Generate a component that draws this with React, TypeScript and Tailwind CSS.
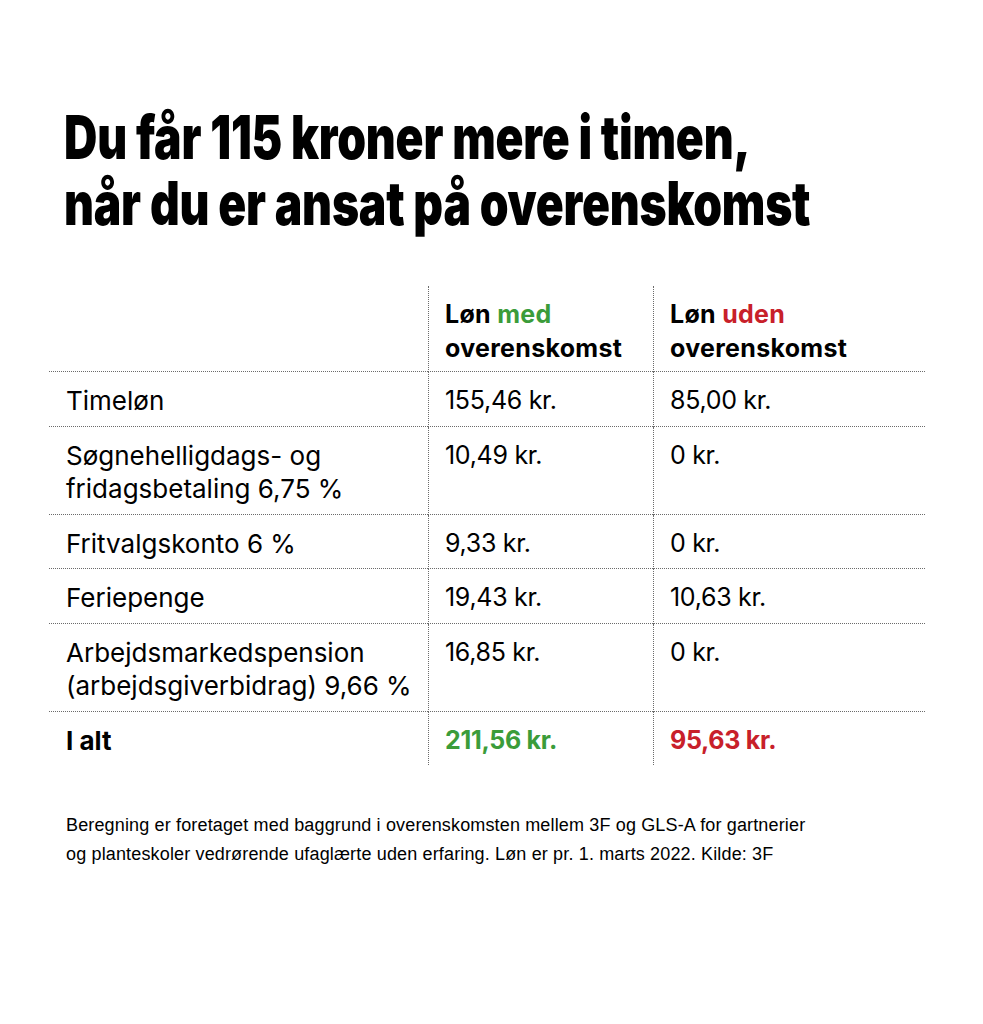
import React from "react";

const rows: { label: string[]; med: string; uden: string }[] = [
  { label: ["Timeløn"], med: "155,46 kr.", uden: "85,00 kr." },
  { label: ["Søgnehelligdags- og", "fridagsbetaling 6,75 %"], med: "10,49 kr.", uden: "0 kr." },
  { label: ["Fritvalgskonto 6 %"], med: "9,33 kr.", uden: "0 kr." },
  { label: ["Feriepenge"], med: "19,43 kr.", uden: "10,63 kr." },
  { label: ["Arbejdsmarkedspension", "(arbejdsgiverbidrag) 9,66 %"], med: "16,85 kr.", uden: "0 kr." },
];

const body = "[font-family:Inter,sans-serif]";
const pad = "pt-[12px] pb-[8px]";
const labelCell = `${pad} text-[26px] leading-[33.5px] tracking-[0px]`;
const valueCell = `${pad} text-[25px] leading-[33.5px] tracking-[-0.3px]`;
const line = "border-dotted border-[#6b6b6b]";

export default function App() {
  return (
    <div className="w-[983px] h-[1024px] bg-white text-black overflow-hidden">
      <div className="pt-[104px] pl-[64px]">
        <h1 className="origin-left scale-x-[0.77] whitespace-nowrap [font-family:Inter,sans-serif] font-black text-[60px] leading-[66px] tracking-[-0.3px]">
          <div>Du får 115 kroner mere i timen,</div>
          <div>når du er ansat på overenskomst</div>
        </h1>
      </div>

      <div className={`mt-[50px] ml-[49px] w-[876px] ${body}`}>
        <div className="grid grid-cols-[379px_225px_272px]">
          <div className={`border-b ${line}`} />
          <div className={`border-l border-b ${line} pl-[16px] pt-[11px] pb-[6px] font-bold text-[25px] leading-[34px] tracking-[0.3px]`}>
            <div>Løn <span className="text-[#3b9c3a]">med</span></div>
            <div>overenskomst</div>
          </div>
          <div className={`border-l border-b ${line} pl-[16px] pt-[11px] pb-[6px] font-bold text-[25px] leading-[34px] tracking-[0.3px]`}>
            <div>Løn <span className="text-[#c8202a]">uden</span></div>
            <div>overenskomst</div>
          </div>

          {rows.map((r) => (
            <React.Fragment key={r.label[0]}>
              <div className={`border-b ${line} pl-[17px] ${labelCell}`}>
                {r.label.map((l) => (
                  <div key={l}>{l}</div>
                ))}
              </div>
              <div className={`border-l border-b ${line} pl-[16px] ${valueCell}`}>{r.med}</div>
              <div className={`border-l border-b ${line} pl-[16px] ${valueCell}`}>{r.uden}</div>
            </React.Fragment>
          ))}

          <div className={`pl-[17px] font-bold ${labelCell}`}>I alt</div>
          <div className={`border-l ${line} pl-[16px] font-bold text-[#3b9c3a] ${valueCell}`}>211,56 kr.</div>
          <div className={`border-l ${line} pl-[16px] font-bold text-[#c8202a] ${valueCell}`}>95,63 kr.</div>
        </div>
      </div>

      <div className="mt-[46px] pl-[66px] text-[18px] leading-[29px] tracking-[0.15px] [font-family:'Liberation_Sans',Arial,sans-serif]">
        <div>Beregning er foretaget med baggrund i overenskomsten mellem 3F og GLS-A for gartnerier</div>
        <div>og planteskoler vedrørende ufaglærte uden erfaring. Løn er pr. 1. marts 2022. Kilde: 3F</div>
      </div>
    </div>
  );
}
